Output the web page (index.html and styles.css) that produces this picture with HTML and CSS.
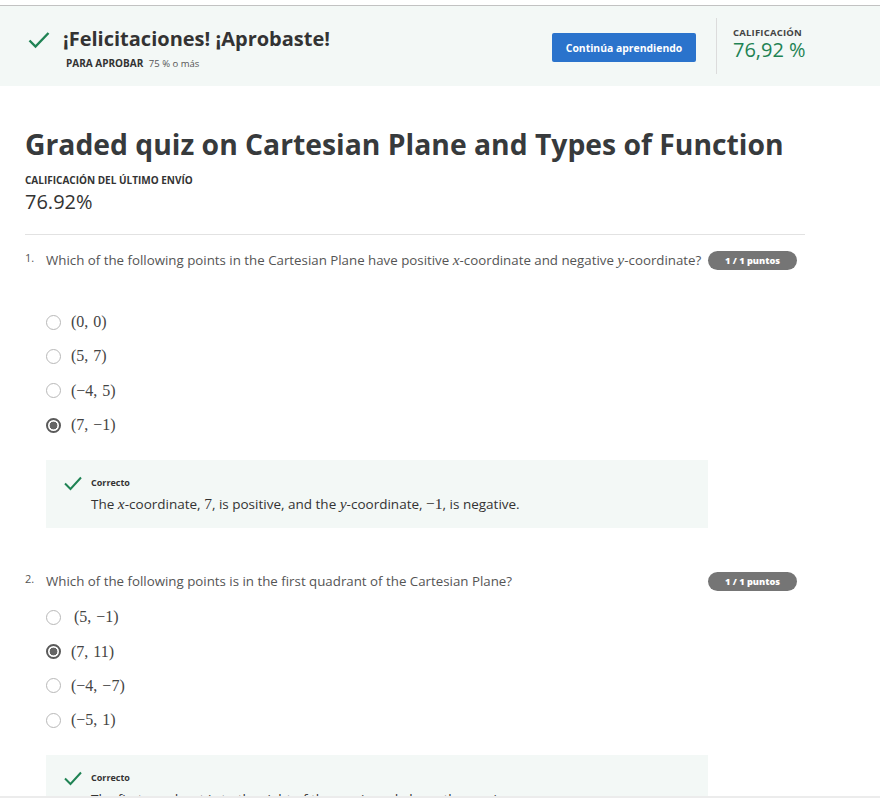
FILE: index.html
```html
<!DOCTYPE html>
<html lang="es">
<head>
<meta charset="utf-8">
<title>Graded quiz on Cartesian Plane and Types of Function</title>
<link rel="stylesheet" href="styles.css">
</head>
<body>
<div class="topline"></div>
<header class="banner">
  <div class="pass">
    <div class="pass-title">
      <svg class="check" viewBox="0 0 22 18" width="22" height="18"><path d="M1.5 9.5 L7.5 15.5 L20.5 2" fill="none" stroke="#1f8354" stroke-width="2.4"/></svg>
      <h2>¡Felicitaciones! ¡Aprobaste!</h2>
    </div>
    <p class="pass-req"><b>PARA APROBAR</b> <span>75 % o más</span></p>
  </div>
  <button class="btn">Continúa aprendiendo</button>
  <div class="divider"></div>
  <div class="grade">
    <div class="grade-label">CALIFICACIÓN</div>
    <div class="grade-value">76,92 %</div>
  </div>
</header>

<main class="content">
  <h1>Graded quiz on Cartesian Plane and Types of Function</h1>
  <div class="last-label">CALIFICACIÓN DEL ÚLTIMO ENVÍO</div>
  <div class="last-value">76.92%</div>
  <hr class="rule">

  <section class="question">
    <div class="q-row">
      <span class="q-num">1.</span>
      <p class="q-text">Which of the following points in the Cartesian Plane have positive <i class="mv">x</i>-coordinate and negative <i class="mv">y</i>-coordinate?</p>
      <span class="badge">1 / 1 puntos</span>
    </div>
    <ul class="options options-first">
      <li class="opt"><span class="radio"></span><span class="math">(0, 0)</span></li>
      <li class="opt"><span class="radio"></span><span class="math">(5, 7)</span></li>
      <li class="opt"><span class="radio"></span><span class="math">(−4, 5)</span></li>
      <li class="opt"><span class="radio checked"></span><span class="math">(7, −1)</span></li>
    </ul>
    <div class="feedback">
      <svg class="fb-check" viewBox="0 0 18 15" width="18" height="15"><path d="M1 7.5 L6.5 13 L17 1.5" fill="none" stroke="#1f8354" stroke-width="2"/></svg>
      <div class="fb-body">
        <div class="fb-title">Correcto</div>
        <p class="fb-text">The <i class="mv">x</i>-coordinate, <span class="mn">7</span>, is positive, and the <i class="mv">y</i>-coordinate, <span class="mn">−1</span>, is negative.</p>
      </div>
    </div>
  </section>

  <section class="question question-next">
    <div class="q-row">
      <span class="q-num">2.</span>
      <p class="q-text">Which of the following points is in the first quadrant of the Cartesian Plane?</p>
      <span class="badge">1 / 1 puntos</span>
    </div>
    <ul class="options">
      <li class="opt"><span class="radio"></span><span class="math math-pad">(5, −1)</span></li>
      <li class="opt"><span class="radio checked"></span><span class="math">(7, 11)</span></li>
      <li class="opt"><span class="radio"></span><span class="math">(−4, −7)</span></li>
      <li class="opt"><span class="radio"></span><span class="math">(−5, 1)</span></li>
    </ul>
    <div class="feedback">
      <svg class="fb-check" viewBox="0 0 18 15" width="18" height="15"><path d="M1 7.5 L6.5 13 L17 1.5" fill="none" stroke="#1f8354" stroke-width="2"/></svg>
      <div class="fb-body">
        <div class="fb-title">Correcto</div>
        <p class="fb-text">The first quadrant is to the right of the <i class="mv">y</i>-axis and above the <i class="mv">x</i>-axis.</p>
      </div>
    </div>
  </section>
</main>
<div class="bottombar"></div>
</body>
</html>
```

FILE: styles.css
```css
* { box-sizing: border-box; }
html, body { margin: 0; padding: 0; background: #fff; }
body {
  font-family: "Open Sans", "Noto Sans", sans-serif;
  color: #444;
  overflow: hidden;
}

.topline { height: 6px; border-bottom: 1px solid #c2c2c2; }

.banner {
  display: flex;
  align-items: flex-start;
  height: 80px;
  background: #f3f8f6;
}
.pass { flex: 1; padding-left: 28px; margin-top: 20px; }
.pass-title { display: flex; align-items: center; gap: 13px; }
.check { display: block; margin-top: 1px; }
.pass-title h2 {
  margin: 0;
  font-size: 20px;
  line-height: 26px;
  font-weight: 700;
  color: #333;
}
.pass-req {
  margin: 4px 0 0 38px;
  font-size: 10px;
  line-height: 14px;
  color: #333;
}
.pass-req b { font-weight: 700; margin-right: 3px; }
.pass-req span { color: #555; font-size: 9.5px; }

.btn {
  margin-top: 27px;
  width: 144px;
  height: 29px;
  border: 0;
  border-radius: 2px;
  background: #2a73cc;
  color: #fff;
  font-family: "Open Sans", sans-serif;
  font-weight: 700;
  font-size: 10.4px;
  padding: 0;
}
.divider {
  margin: 12px 16px 0 20px;
  width: 1px;
  height: 56px;
  background: #dcdcdc;
}
.grade { width: 147px; margin-top: 21px; }
.grade-label {
  font-size: 9.5px;
  line-height: 12px;
  font-weight: 700;
  color: #444;
  letter-spacing: 0.2px;
}
.grade-value {
  font-size: 20px;
  line-height: 22px;
  color: #1f8354;
}

.content { padding-left: 25px; width: 805px; }
.content h1 {
  margin: 40px 0 0;
  font-size: 28.3px;
  line-height: 36px;
  font-weight: 700;
  color: #373a3c;
}
.last-label {
  margin-top: 11px;
  font-size: 10px;
  line-height: 14px;
  font-weight: 700;
  color: #333;
}
.last-value {
  margin-top: 2px;
  font-size: 20px;
  line-height: 26px;
  color: #333;
}
.rule {
  margin: 19px 0 0;
  border: 0;
  border-top: 1px solid #e2e2e2;
  height: 0;
}

.question { margin-top: 15px; }
.question-next { margin-top: 43px; }
.q-row { display: flex; align-items: flex-start; }
.q-num {
  width: 21px;
  font-size: 11px;
  line-height: 20px;
  margin-top: -2px;
  color: #555;
}
.q-text {
  margin: 0;
  width: 662px;
  font-size: 13.3px;
  line-height: 20px;
  color: #555;
}
.mv { font-family: "Liberation Serif", "DejaVu Serif", serif; font-style: italic; font-size: 15.5px; }
.mn { font-family: "Liberation Serif", "DejaVu Serif", serif; font-size: 15.5px; }
.badge {
  margin-top: 1px;
  width: 89px;
  height: 19px;
  border-radius: 10px;
  background: #757575;
  color: #fff;
  font-size: 9.2px;
  font-weight: 800;
  line-height: 19px;
  text-align: center;
}

.options { list-style: none; margin: 9px 0 0; padding: 0 0 0 21px; }
.options-first { margin-top: 35px; }
.opt {
  display: flex;
  align-items: center;
  gap: 10px;
  height: 34.3px;
}
.radio {
  width: 15px;
  height: 15px;
  border: 1px solid #b8b8b8;
  border-radius: 50%;
  background: #fff;
  flex: none;
}
.radio.checked {
  border: 2px solid #5a5a5a;
  background: radial-gradient(circle, #666 0 3.6px, #fff 4.2px);
}
.math {
  font-family: "Liberation Serif", "DejaVu Serif", serif;
  font-size: 16px;
  color: #444;
  word-spacing: 1px;
}
.math-pad { padding-left: 3px; }

.feedback {
  margin: 18px 0 0 21px;
  width: 662px;
  background: #f3f8f6;
  padding: 16px 18px 14px;
  display: flex;
  gap: 9px;
  align-items: flex-start;
}
.fb-check { display: block; flex: none; }
.fb-title {
  font-size: 9px;
  line-height: 14px;
  font-weight: 700;
  color: #333;
}
.fb-text {
  margin: 4px 0 0;
  font-size: 13.5px;
  line-height: 20px;
  color: #333;
}

.bottombar {
  position: fixed;
  left: 0;
  right: 0;
  bottom: 0;
  height: 2px;
  background: #ececec;
}
```
